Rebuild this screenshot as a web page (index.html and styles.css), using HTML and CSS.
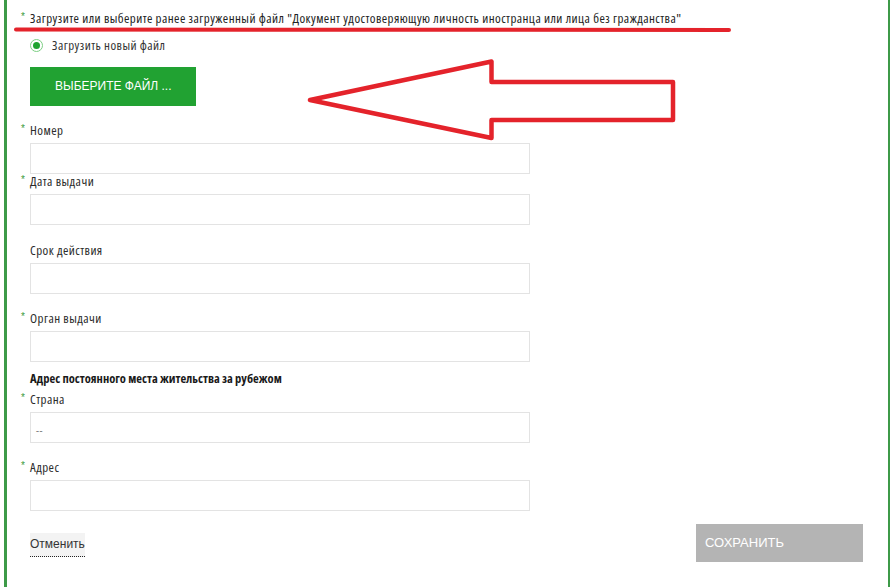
FILE: index.html
```html
<!DOCTYPE html>
<html lang="ru">
<head>
<meta charset="utf-8">
<title>Документ</title>
<link rel="stylesheet" href="styles.css">
</head>
<body>
<div class="frame">
  <div class="title req">Загрузите или выберите ранее загруженный файл "Документ удостоверяющую личность иностранца или лица без гражданства"</div>
  <label class="radio-row">
    <span class="radio"><span class="radio-dot"></span></span>
    <span class="radio-label">Загрузить новый файл</span>
  </label>
  <div class="file-btn">ВЫБЕРИТЕ ФАЙЛ ...</div>

  <div class="field f-number">
    <div class="label req">Номер</div>
    <div class="input"></div>
  </div>
  <div class="field f-date">
    <div class="label req">Дата выдачи</div>
    <div class="input"></div>
  </div>
  <div class="field f-term">
    <div class="label">Срок действия</div>
    <div class="input"></div>
  </div>
  <div class="field f-org">
    <div class="label req">Орган выдачи</div>
    <div class="input"></div>
  </div>
  <div class="section-title">Адрес постоянного места жительства за рубежом</div>
  <div class="field f-country">
    <div class="label req">Страна</div>
    <div class="input select"><span class="placeholder">--</span></div>
  </div>
  <div class="field f-address">
    <div class="label req">Адрес</div>
    <div class="input"></div>
  </div>

  <div class="actions">
    <span class="cancel">Отменить</span>
    <span class="save">СОХРАНИТЬ</span>
  </div>

  <svg class="annotation" width="881" height="587" viewBox="0 0 881 587">
    <line x1="9" y1="29.5" x2="722" y2="30" stroke="#e4232b" stroke-width="4" stroke-linecap="round"/>
    <polygon points="303,100 484.5,61.5 484.5,82 666,82 666,120 484.5,120 484.5,138" fill="none" stroke="#e4232b" stroke-width="4.5" stroke-linejoin="round"/>
  </svg>
</div>
</body>
</html>
```
FILE: styles.css
```css
html, body {
  margin: 0;
  padding: 0;
  background: #ffffff;
}

body {
  font-family: "Open Sans", "Liberation Sans", Arial, sans-serif;
  font-stretch: 75%;
  font-size: 13px;
  letter-spacing: 0.43px;
  color: #2b2b2b;
}

.frame {
  position: relative;
  margin-left: 4px;
  height: 587px;
  box-sizing: border-box;
  border-left: 3px solid #3d9a48;
  border-right: 2px solid #3d9a48;
  padding: 10px 25px 0 23px;
  overflow: hidden;
}

.req {
  position: relative;
}

.req::before {
  content: "*";
  position: absolute;
  left: -9px;
  top: -1px;
  font-size: 10px;
  font-stretch: 100%;
  letter-spacing: 0;
  color: #3a9a3a;
  font-family: "Liberation Sans", sans-serif;
}

.title {
  line-height: 16px;
  color: #222222;
  white-space: nowrap;
}

.radio-row {
  display: flex;
  align-items: center;
  gap: 9px;
  margin-top: 11px;
  height: 16px;
}

.radio {
  width: 13px;
  height: 13px;
  box-sizing: border-box;
  border: 1px solid #7ccf83;
  border-radius: 50%;
  display: flex;
  align-items: center;
  justify-content: center;
  background: #ffffff;
}

.radio-dot {
  width: 7px;
  height: 7px;
  border-radius: 50%;
  background: #1fa330;
}

.radio-label {
  line-height: 16px;
  color: #333333;
}

.file-btn {
  margin-top: 14px;
  width: 166px;
  height: 39px;
  box-sizing: border-box;
  padding-left: 25px;
  background: #21a232;
  color: #ffffff;
  font-family: "Liberation Sans", Arial, sans-serif;
  font-stretch: 100%;
  letter-spacing: 0;
  font-size: 12px;
  line-height: 39px;
}

.field .label {
  line-height: 16px;
  color: #2b2b2b;
  margin-bottom: 5px;
}

.input {
  width: 500px;
  height: 31px;
  box-sizing: border-box;
  border: 1px solid #e3e3e3;
  background: #ffffff;
}

.f-number { margin-top: 16px; }
.f-date { margin-top: -1px; }
.f-term { margin-top: 17px; }
.f-org { margin-top: 16px; }
.f-country { margin-top: 4px; }
.f-address { margin-top: 16px; }

.section-title {
  margin-top: 9px;
  line-height: 16px;
  font-weight: bold;
  font-size: 12.5px;
  letter-spacing: 0;
  color: #1a1a1a;
}

.select {
  display: flex;
  align-items: center;
  padding-left: 5px;
  padding-top: 5px;
}

.placeholder {
  color: #777777;
  font-size: 11px;
  line-height: 12px;
}

.actions {
  margin-top: 13px;
  display: flex;
  align-items: center;
  justify-content: space-between;
}

.cancel {
  margin-top: 4px;
  font-family: "Liberation Sans", Arial, sans-serif;
  font-stretch: 100%;
  letter-spacing: 0;
  font-size: 12px;
  color: #333333;
  background: #f3f3f3;
  line-height: 23px;
  border-bottom: 1px dotted #222222;
}

.save {
  width: 167px;
  height: 38px;
  box-sizing: border-box;
  padding-left: 9px;
  background: #b4b4b4;
  color: #ffffff;
  font-family: "Liberation Sans", Arial, sans-serif;
  font-stretch: 100%;
  letter-spacing: 0;
  font-size: 13px;
  line-height: 38px;
}

.annotation {
  position: absolute;
  left: 0;
  top: 0;
  pointer-events: none;
}
```
